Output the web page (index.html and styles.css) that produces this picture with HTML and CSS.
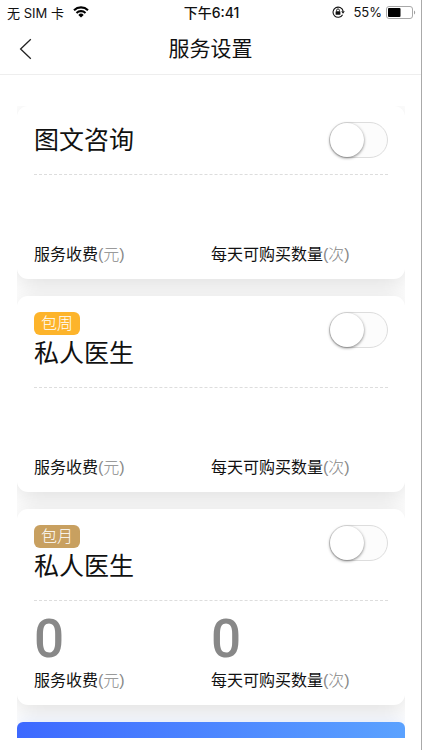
FILE: index.html
```html
<!DOCTYPE html>
<html lang="zh-CN">
<head>
    <meta charset="UTF-8">
    <meta name="viewport" content="width=device-width, initial-scale=1.0">
    <title>服务设置</title>
    <link rel="stylesheet" href="styles.css">
</head>
<body>
    <div class="page">
        <div class="status-bar">
            <div class="status-left">
                <span>无 SIM 卡</span>
                <svg class="wifi" width="16" height="12" viewBox="0 0 16 12">
                    <path d="M1 4.2a10.2 10.2 0 0 1 14 0M3.5 6.9a6.6 6.6 0 0 1 9 0" fill="none" stroke="#000" stroke-width="2.1"/>
                    <path d="M8 11.6L5.3 8.9a3.9 3.9 0 0 1 5.4 0z" fill="#000"/>
                </svg>
            </div>
            <div class="status-time">下午6:41</div>
            <div class="status-right">
                <svg class="lock" width="13" height="12" viewBox="0 0 13 12">
                    <path d="M10.6 8.7A5.1 5.1 0 1 1 11.1 5" fill="none" stroke="#111" stroke-width="1.1"/>
                    <path d="M9.2 5.2h3.6L11 7.8z" fill="#111"/>
                    <rect x="3.6" y="5.3" width="4.8" height="3.5" rx="0.5" fill="#111"/>
                    <path d="M4.6 5.4V4.3a1.4 1.4 0 0 1 2.8 0v1.1" fill="none" stroke="#111" stroke-width="0.9"/>
                </svg>
                <span>55%</span>
                <svg class="battery" width="30" height="13" viewBox="0 0 30 13">
                    <rect x="0.5" y="0.5" width="26" height="12" rx="2.5" fill="#fff" stroke="#a8a8a8"/>
                    <rect x="2" y="2" width="12.5" height="9" rx="1" fill="#000"/>
                    <path d="M28 4.5c1.6.8 1.6 3.2 0 4z" fill="#a0a0a0"/>
                </svg>
            </div>
        </div>

        <header class="nav">
            <button class="back" aria-label="返回">
                <svg width="13" height="22" viewBox="0 0 13 22">
                    <path d="M11.8 1.2L1.6 11l10.2 9.8" fill="none" stroke="#222" stroke-width="1.3"/>
                </svg>
            </button>
            <h1>服务设置</h1>
        </header>

        <main class="list">
            <section class="card">
                <div class="card-head">
                    <h2>图文咨询</h2>
                    <input type="checkbox" class="switch" aria-label="图文咨询">
                </div>
                <div class="card-body">
                    <div class="field">
                        <input type="text" id="price1" value="">
                        <label for="price1">服务收费<span>(元)</span></label>
                    </div>
                    <div class="field">
                        <input type="text" id="count1" value="">
                        <label for="count1">每天可购买数量<span>(次)</span></label>
                    </div>
                </div>
            </section>

            <section class="card">
                <div class="card-head">
                    <div>
                        <span class="tag tag-week">包周</span>
                        <h2>私人医生</h2>
                    </div>
                    <input type="checkbox" class="switch" aria-label="包周私人医生">
                </div>
                <div class="card-body">
                    <div class="field">
                        <input type="text" id="price2" value="">
                        <label for="price2">服务收费<span>(元)</span></label>
                    </div>
                    <div class="field">
                        <input type="text" id="count2" value="">
                        <label for="count2">每天可购买数量<span>(次)</span></label>
                    </div>
                </div>
            </section>

            <section class="card">
                <div class="card-head">
                    <div>
                        <span class="tag tag-month">包月</span>
                        <h2>私人医生</h2>
                    </div>
                    <input type="checkbox" class="switch" aria-label="包月私人医生">
                </div>
                <div class="card-body">
                    <div class="field">
                        <input type="text" id="price3" value="0">
                        <label for="price3">服务收费<span>(元)</span></label>
                    </div>
                    <div class="field">
                        <input type="text" id="count3" value="0">
                        <label for="count3">每天可购买数量<span>(次)</span></label>
                    </div>
                </div>
            </section>

            <button class="save" aria-label="保存"></button>
        </main>
    </div>
</body>
</html>
```

FILE: styles.css
```css
* {
    box-sizing: border-box;
}
body {
    margin: 0;
    background: #fff;
    color: #111;
    font-family: "Liberation Sans", "Noto Sans CJK SC", sans-serif;
}
h1, h2 {
    margin: 0;
    font-weight: 400;
}
.page {
    display: flex;
    flex-direction: column;
    height: 100vh;
    border-right: 1px solid #aaa;
}

/* status bar */
.status-bar {
    display: grid;
    grid-template-columns: 1fr auto 1fr;
    align-items: center;
    height: 24px;
    padding: 0 5px 0 7px;
    font-family: Inter, "Noto Sans CJK SC", sans-serif;
    font-size: 13px;
}
.status-left, .status-right {
    display: flex;
    align-items: center;
}
.status-left {
    gap: 9px;
}
.status-right {
    justify-content: flex-end;
    gap: 4px;
}
.lock {
    margin-right: 4px;
}
.status-time {
    font-size: 14px;
    font-weight: 500;
}

/* title bar */
.nav {
    display: grid;
    grid-template-columns: 48px 1fr 48px;
    align-items: center;
    height: 51px;
    border-bottom: 1px solid #eee;
}
.nav h1 {
    font-size: 21px;
    line-height: 30px;
    text-align: center;
}
.back {
    display: flex;
    padding: 0 0 0 19px;
    border: 0;
    background: none;
}

/* service cards */
.list {
    display: flex;
    flex-direction: column;
    flex: 1;
    gap: 17px;
    min-height: 0;
    margin: 31px 16px 12px 17px;
    overflow: auto;
    scrollbar-width: none;
}
.card {
    flex-shrink: 0;
    padding: 0 17px;
    border-radius: 11px;
    background: #fff;
    box-shadow: 0 6px 24px rgba(0, 0, 0, 0.13);
}
.card-head {
    display: flex;
    justify-content: space-between;
    align-items: flex-start;
    padding: 16px 0;
    border-bottom: 1px dashed #ddd;
}
.card-head h2 {
    font-size: 25px;
    line-height: 36px;
}
.tag {
    display: block;
    width: max-content;
    padding: 0 7px;
    border-radius: 6px;
    color: #fff;
    font-size: 16px;
    font-weight: 300;
    line-height: 23px;
}
.tag-week {
    background: #fdb42b;
}
.tag-month {
    background: #c8a060;
}
.switch {
    appearance: none;
    width: 59px;
    height: 36px;
    margin: 0;
    border: 1px solid #ddd;
    border-radius: 18px;
    background: #fcfcfc;
}
.switch::before {
    content: "";
    display: block;
    width: 34px;
    height: 34px;
    border-radius: 50%;
    background: #fff;
    box-shadow: 0 1px 3px rgba(0, 0, 0, 0.5);
}
.switch:checked {
    background: #4080ff;
}
.switch:checked::before {
    margin-left: auto;
}
.card-body {
    display: grid;
    grid-template-columns: 1fr 1fr;
    padding: 10px 0 12px;
}
.field input {
    display: block;
    width: 100%;
    height: 56px;
    margin-bottom: 2px;
    padding: 0;
    border: 0;
    outline: 0;
    background: none;
    color: #888;
    font-family: Roboto, sans-serif;
    font-size: 53px;
    font-weight: 500;
}
.field label {
    display: block;
    font-size: 16px;
    line-height: 24px;
}
.field label span {
    color: #888;
    font-weight: 300;
}
.save {
    flex-shrink: 0;
    height: 50px;
    border: 0;
    border-radius: 6px;
    background: linear-gradient(90deg, #3d69ff, #5ba2ff);
    box-shadow: 0 0 16px rgba(64, 128, 255, 0.15);
}
```
